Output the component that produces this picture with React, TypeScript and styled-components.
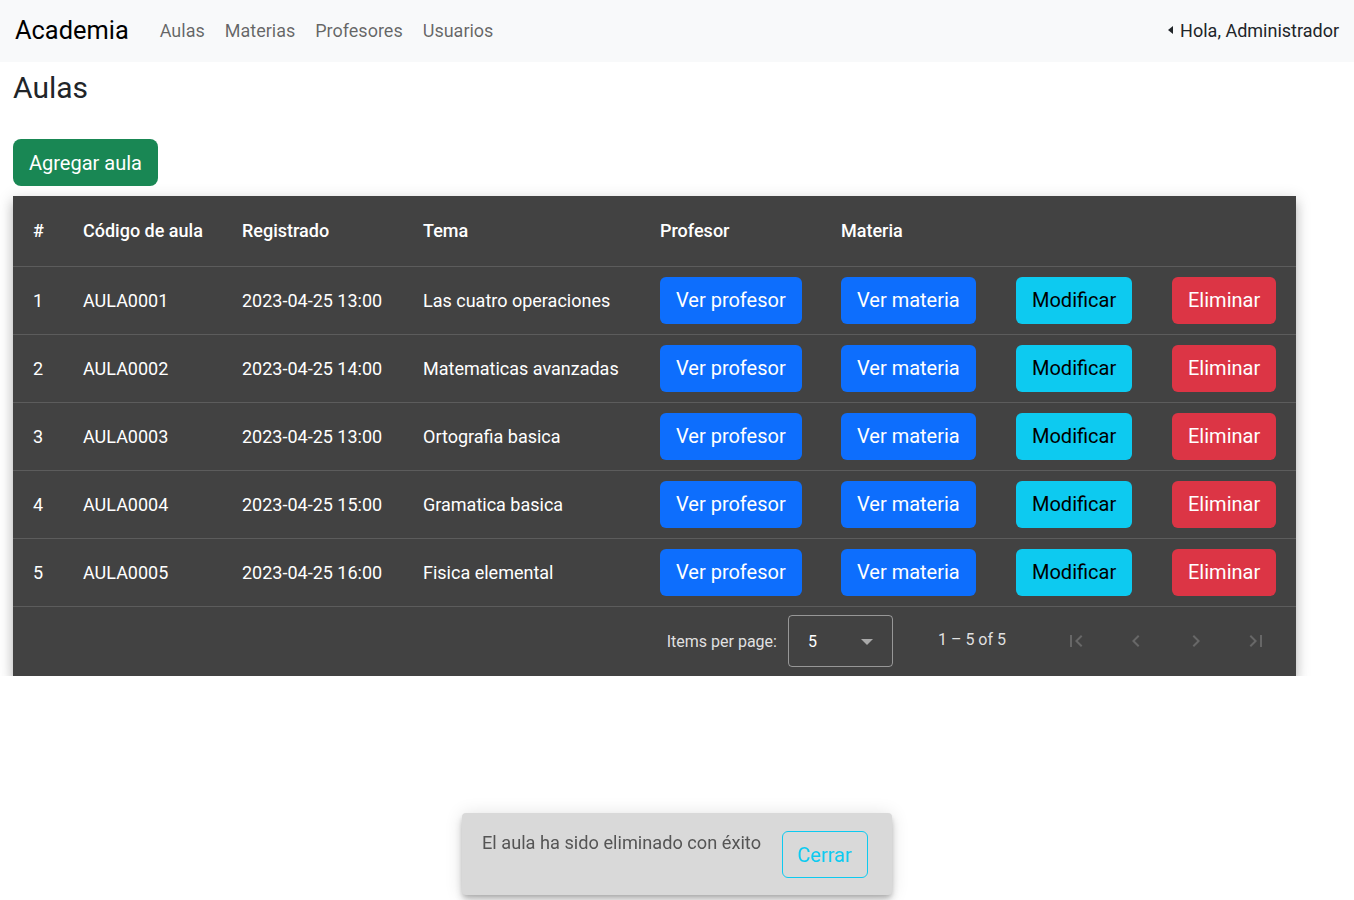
import React from "react";
import styled, { createGlobalStyle } from "styled-components";

const GlobalStyle = createGlobalStyle`
  html, body { margin: 0; padding: 0; background: #fff; }
  body { font-family: Roboto, "Liberation Sans", sans-serif; color: #212529; }
  * { box-sizing: border-box; }
`;

const Navbar = styled.nav`
  height: 62px;
  background: #f8f9fa;
  display: flex;
  align-items: center;
  padding: 0 15px 2px 15px;
`;

const Brand = styled.a`
  font-size: 25.4px;
  color: #000;
  margin-right: 31px;
  text-decoration: none;
`;

const NavLinks = styled.div`
  display: flex;
  gap: 20px;
  flex: 1;
`;

const NavLink = styled.a`
  font-size: 18px;
  color: rgba(0, 0, 0, 0.6);
  text-decoration: none;
`;

const UserMenu = styled.div`
  display: flex;
  align-items: center;
  gap: 7px;
  font-size: 18px;
  color: #212529;
`;

const Caret = styled.span`
  width: 0;
  height: 0;
  border-top: 4px solid transparent;
  border-bottom: 4px solid transparent;
  border-right: 5px solid #212529;
`;

const Main = styled.main`
  padding: 0 13px;
`;

const Title = styled.h2`
  margin: 8px 0 0;
  font-size: 30px;
  font-weight: 400;
  line-height: 36px;
`;

const AddButton = styled.button`
  margin-top: 33px;
  height: 47px;
  padding: 0 16px;
  font-family: inherit;
  font-size: 20px;
  color: #fff;
  background: #198754;
  border: none;
  border-radius: 8px;
`;

const TableCard = styled.div`
  margin-top: 10px;
  width: 1283px;
  background: #424242;
  box-shadow: 0 5px 5px -3px rgba(0,0,0,.2), 0 8px 10px 1px rgba(0,0,0,.14), 0 3px 14px 2px rgba(0,0,0,.12);
`;

const Table = styled.table`
  width: 100%;
  border-collapse: collapse;
  table-layout: fixed;
`;

const HeadCell = styled.th`
  height: 70px;
  padding: 0 0 0 20px;
  text-align: left;
  font-size: 18px;
  font-weight: 500;
  color: #fff;
  border-bottom: 1px solid rgba(255,255,255,0.14);
  &:last-child { padding-right: 20px; }
`;

const Cell = styled.td`
  height: 68px;
  padding: 0 0 0 20px;
  font-size: 18px;
  color: #fff;
  white-space: nowrap;
  border-bottom: 1px solid rgba(255,255,255,0.14);
  &:last-child { padding-right: 20px; }
`;

const variants: Record<string, { bg: string; fg: string }> = {
  primary: { bg: "#0d6efd", fg: "#fff" },
  info: { bg: "#0dcaf0", fg: "#000" },
  danger: { bg: "#dc3545", fg: "#fff" },
};

const RowButton = styled.button<{ $v: string }>`
  height: 47px;
  padding: 0 16px;
  font-family: inherit;
  font-size: 20px;
  border: none;
  border-radius: 6px;
  background: ${(p) => variants[p.$v].bg};
  color: ${(p) => variants[p.$v].fg};
`;

const Paginator = styled.div`
  height: 69px;
  display: flex;
  align-items: center;
  justify-content: flex-end;
  padding-right: 20px;
  color: rgba(255,255,255,0.85);
  font-size: 16px;
`;

const PageLabel = styled.span`
  margin-right: 11px;
`;

const Select = styled.div`
  width: 105px;
  height: 52px;
  border: 1px solid rgba(255,255,255,0.45);
  border-radius: 4px;
  display: flex;
  align-items: center;
  justify-content: space-between;
  padding: 0 19px 0 19px;
  font-size: 16px;
  color: #fff;
`;

const SelectArrow = styled.span`
  width: 0;
  height: 0;
  border-left: 6px solid transparent;
  border-right: 6px solid transparent;
  border-top: 6px solid rgba(255,255,255,0.55);
  margin-top: 2px;
`;

const RangeLabel = styled.span`
  margin: -3px 50px 0 45px;
`;

const NavButtons = styled.div`
  display: flex;
  gap: 20px;
`;

const IconButton = styled.button`
  width: 40px;
  height: 40px;
  display: flex;
  align-items: center;
  justify-content: center;
  background: transparent;
  border: none;
  padding: 0;
  color: rgba(255,255,255,0.2);
`;

const Snackbar = styled.div`
  position: fixed;
  left: 462px;
  top: 813px;
  width: 430px;
  height: 82px;
  background: #d9d9d9;
  border-radius: 4px;
  box-shadow: 0 3px 5px -1px rgba(0,0,0,.2), 0 6px 10px 0 rgba(0,0,0,.14), 0 1px 18px 0 rgba(0,0,0,.12);
  display: flex;
  align-items: flex-start;
  justify-content: space-between;
  padding: 18px 24px 0 20px;
`;

const SnackText = styled.span`
  font-size: 18.2px;
  line-height: 24px;
  color: #555;
`;

const CloseButton = styled.button`
  height: 47px;
  padding: 0 15px;
  font-family: inherit;
  font-size: 20px;
  color: #0dcaf0;
  background: transparent;
  border: 1px solid #0dcaf0;
  border-radius: 6px;
`;

const rows = [
  ["1", "AULA0001", "2023-04-25 13:00", "Las cuatro operaciones"],
  ["2", "AULA0002", "2023-04-25 14:00", "Matematicas avanzadas"],
  ["3", "AULA0003", "2023-04-25 13:00", "Ortografia basica"],
  ["4", "AULA0004", "2023-04-25 15:00", "Gramatica basica"],
  ["5", "AULA0005", "2023-04-25 16:00", "Fisica elemental"],
];

const widths = [50, 159, 181, 237, 181, 175, 156, 144];

const Icon = ({ d }: { d: string }) => (
  <svg width="24" height="24" viewBox="0 0 24 24" fill="currentColor">
    <path d={d} />
  </svg>
);

export default function App() {
  return (
    <>
      <GlobalStyle />
      <Navbar>
        <Brand>Academia</Brand>
        <NavLinks>
          <NavLink>Aulas</NavLink>
          <NavLink>Materias</NavLink>
          <NavLink>Profesores</NavLink>
          <NavLink>Usuarios</NavLink>
        </NavLinks>
        <UserMenu>
          <Caret />
          Hola, Administrador
        </UserMenu>
      </Navbar>
      <Main>
        <Title>Aulas</Title>
        <AddButton>Agregar aula</AddButton>
        <TableCard>
          <Table>
            <colgroup>
              {widths.map((w, i) => (
                <col key={i} style={{ width: w }} />
              ))}
            </colgroup>
            <thead>
              <tr>
                <HeadCell>#</HeadCell>
                <HeadCell>Código de aula</HeadCell>
                <HeadCell>Registrado</HeadCell>
                <HeadCell>Tema</HeadCell>
                <HeadCell>Profesor</HeadCell>
                <HeadCell>Materia</HeadCell>
                <HeadCell></HeadCell>
                <HeadCell></HeadCell>
              </tr>
            </thead>
            <tbody>
              {rows.map((r) => (
                <tr key={r[0]}>
                  <Cell>{r[0]}</Cell>
                  <Cell>{r[1]}</Cell>
                  <Cell>{r[2]}</Cell>
                  <Cell>{r[3]}</Cell>
                  <Cell><RowButton $v="primary">Ver profesor</RowButton></Cell>
                  <Cell><RowButton $v="primary">Ver materia</RowButton></Cell>
                  <Cell><RowButton $v="info">Modificar</RowButton></Cell>
                  <Cell><RowButton $v="danger">Eliminar</RowButton></Cell>
                </tr>
              ))}
            </tbody>
          </Table>
          <Paginator>
            <PageLabel>Items per page:</PageLabel>
            <Select>
              <span>5</span>
              <SelectArrow />
            </Select>
            <RangeLabel>1 – 5 of 5</RangeLabel>
            <NavButtons>
              <IconButton><Icon d="M18.41 16.59L13.82 12l4.59-4.59L17 6l-6 6 6 6zM6 6h2v12H6z" /></IconButton>
              <IconButton><Icon d="M15.41 7.41L14 6l-6 6 6 6 1.41-1.41L10.83 12z" /></IconButton>
              <IconButton><Icon d="M10 6L8.59 7.41 13.17 12l-4.58 4.59L10 18l6-6z" /></IconButton>
              <IconButton><Icon d="M5.59 7.41L10.18 12l-4.59 4.59L7 18l6-6-6-6zM16 6h2v12h-2z" /></IconButton>
            </NavButtons>
          </Paginator>
        </TableCard>
      </Main>
      <Snackbar>
        <SnackText>El aula ha sido eliminado con éxito</SnackText>
        <CloseButton>Cerrar</CloseButton>
      </Snackbar>
    </>
  );
}
